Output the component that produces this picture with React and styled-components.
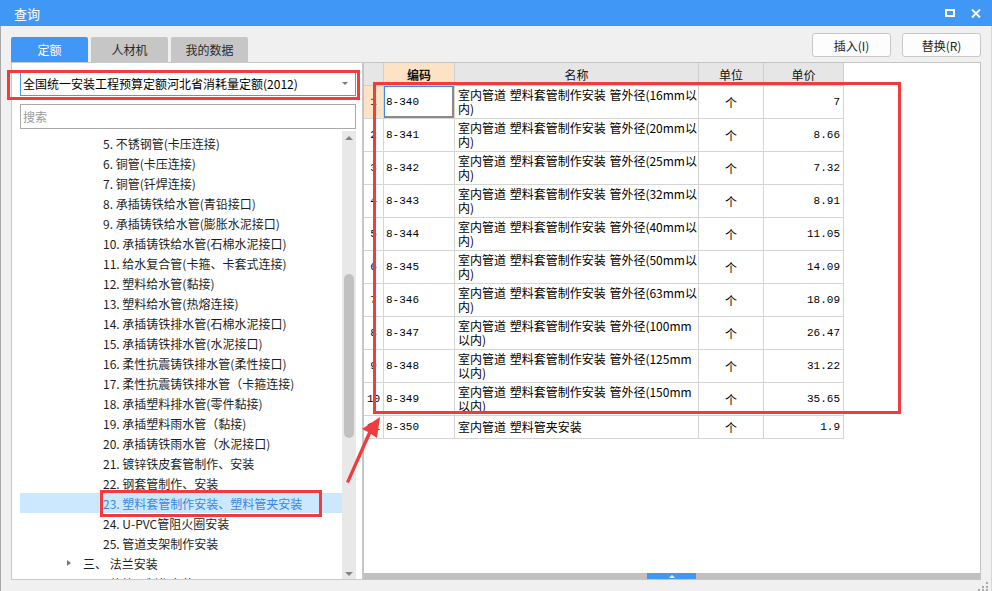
import React from 'react';
import styled, { createGlobalStyle } from 'styled-components';

const Global = createGlobalStyle`
  html, body { margin: 0; padding: 0; background: #f0f0f0; }
  body { font-family: "Noto Sans CJK SC", "Noto Sans", sans-serif; }
  * { box-sizing: border-box; }
`;

const CJK = `"Noto Sans CJK SC", "Noto Sans", sans-serif`;
const MONO = `"Liberation Mono", "Noto Sans CJK SC", monospace`;
const BLUE = '#4197f6';
const RED = '#f03c3c';

const Window = styled.div`
  position: relative;
  width: 992px;
  height: 591px;
  display: flex;
  flex-direction: column;
  overflow: hidden;
  background: #f0f0f0;
  font-family: ${CJK};
`;

const TitleBar = styled.div`
  height: 26px;
  flex-shrink: 0;
  background: ${BLUE};
  display: flex;
  align-items: center;
  padding: 0 11px 0 14px;
  color: #fff;
  font-size: 13px;
`;

const Title = styled.div`
  flex: 1;
`;

const TitleIcons = styled.div`
  display: flex;
  align-items: center;
  gap: 16px;
`;

const Body = styled.div`
  flex: 1;
  display: flex;
  padding: 0 10px 11px 10px;
  border-left: 1px solid #a8a8a8;
  border-right: 1px solid #d8d8d8;
  min-height: 0;
`;

const LeftCol = styled.div`
  width: 352px;
  display: flex;
  flex-direction: column;
`;

const Tabs = styled.div`
  display: flex;
  gap: 3px;
  margin-top: 11px;
  height: 25px;
  flex-shrink: 0;
`;

const Tab = styled.div`
  width: 77px;
  display: flex;
  align-items: center;
  justify-content: center;
  font-size: 12px;
  border-radius: 2px 2px 0 0;
  background: ${p => (p.$active ? BLUE : '#c6c6c6')};
  color: ${p => (p.$active ? '#fff' : '#2a2a2a')};
`;

const LeftPanel = styled.div`
  flex: 1;
  min-height: 0;
  background: #fff;
  border: 1px solid #c9c9c9;
  display: flex;
  flex-direction: column;
  padding: 8px 6px 0 8px;
`;

const Combo = styled.div`
  height: 25px;
  flex-shrink: 0;
  border: 1px solid #4a9af5;
  display: flex;
  align-items: center;
  padding: 0 7px 0 2px;
  font-size: 12px;
  color: #000;
`;

const ComboText = styled.div`
  flex: 1;
  white-space: nowrap;
`;

const Caret = styled.div`
  width: 0;
  height: 0;
  border-left: 3px solid transparent;
  border-right: 3px solid transparent;
  border-top: 3px solid #777;
`;

const Search = styled.div`
  height: 25px;
  flex-shrink: 0;
  margin-top: 8px;
  border: 1px solid #a9a9a9;
  display: flex;
  align-items: center;
  padding-left: 2px;
  font-size: 12px;
  color: #9a9a9a;
`;

const Tree = styled.div`
  flex: 1;
  min-height: 0;
  margin-top: 2px;
  display: flex;
`;

const TreeList = styled.div`
  flex: 1;
  overflow: hidden;
  padding-top: 2px;
  display: flex;
  flex-direction: column;
`;

const TreeItem = styled.div`
  height: 20px;
  flex-shrink: 0;
  display: flex;
  align-items: center;
  padding-left: ${p => p.$indent}px;
  background: ${p => (p.$selected ? '#cce8ff' : 'transparent')};
  color: ${p => (p.$selected ? '#3a86e4' : '#1e1e1e')};
  font-size: 12px;
  white-space: nowrap;
`;

const Expander = styled.span`
  width: 0;
  height: 0;
  border-top: 3px solid transparent;
  border-bottom: 3px solid transparent;
  border-left: 4px solid #777;
  margin-right: 12px;
`;

const VScroll = styled.div`
  width: 14px;
  background: #e8e8e8;
  display: flex;
  flex-direction: column;
  align-items: center;
  padding: 5px 0 3px;
`;

const ArrowUp = styled.div`
  width: 0;
  height: 0;
  border-left: 4px solid transparent;
  border-right: 4px solid transparent;
  border-bottom: 4px solid #858585;
`;

const ArrowDown = styled.div`
  width: 0;
  height: 0;
  border-left: 4px solid transparent;
  border-right: 4px solid transparent;
  border-top: 4px solid #858585;
`;

const Thumb = styled.div`
  width: 10px;
  height: 164px;
  border-radius: 5px;
  background: #c1c1c1;
`;

const Spacer = styled.div`
  flex: 1;
`;

const RightCol = styled.div`
  flex: 1;
  display: flex;
  flex-direction: column;
  min-width: 0;
`;

const ButtonRow = styled.div`
  height: 36px;
  flex-shrink: 0;
  padding-top: 7px;
  display: flex;
  justify-content: flex-end;
  align-items: flex-start;
  gap: 11px;
`;

const Button = styled.div`
  width: 79px;
  height: 24px;
  border: 1px solid #c8c8c8;
  border-radius: 3px;
  background: #fdfdfd;
  display: flex;
  align-items: center;
  justify-content: center;
  font-size: 12px;
  color: #222;
`;

const Grid = styled.div`
  flex: 1;
  min-height: 0;
  background: #fff;
  border: 1px solid #c4c4c4;
  display: flex;
  flex-direction: column;
`;

const Table = styled.div`
  display: grid;
  grid-template-columns: 20px 71px 244px 65px 80px;
  grid-template-rows: 23px repeat(10, 33px) 23px;
  width: max-content;
`;

const HeadCell = styled.div`
  background: ${p => (p.$active ? '#fde3c5' : '#e6e6e6')};
  border-right: 1px solid #cfcfcf;
  border-bottom: 1px solid #cfcfcf;
  display: flex;
  align-items: center;
  justify-content: center;
  font-size: 12px;
  font-weight: ${p => (p.$active ? 700 : 400)};
  color: #111;
`;

const Cell = styled.div`
  border-right: 1px solid #d4d4d4;
  border-bottom: 1px solid #d4d4d4;
  display: flex;
  align-items: center;
  justify-content: ${p => p.$align || 'flex-start'};
  padding: 0 ${p => (p.$align === 'flex-end' ? '3px' : '0')} 0 ${p => (p.$align ? '0' : '2px')};
  font-size: ${p => (p.$mono ? '11px' : '12px')};
  font-family: ${p => (p.$mono ? MONO : CJK)};
  color: #000;
  background: ${p => (p.$hl ? '#fde3c5' : '#fff')};
  overflow: hidden;
  white-space: nowrap;
  box-shadow: ${p => (p.$focus ? 'inset 1px 1px 0 #3c8ce8, inset -2px -2px 0 #8a8a8a' : 'none')};
`;

const NameText = styled.div`
  padding-left: 1px;
  word-spacing: 1px;
`;

const NameLine = styled.div`
  height: 14px;
  line-height: 14px;
`;

const HScroll = styled.div`
  height: 6px;
  flex-shrink: 0;
  background: #c0c0c0;
  display: flex;
`;

const HThumb = styled.div`
  margin-left: 283px;
  width: 49px;
  background: ${BLUE};
  display: flex;
  align-items: center;
  justify-content: center;
`;

const TinyUp = styled.div`
  width: 0;
  height: 0;
  border-left: 3px solid transparent;
  border-right: 3px solid transparent;
  border-bottom: 3px solid #fff;
`;

const Mark = styled.div`
  position: absolute;
  left: ${p => p.$x}px;
  top: ${p => p.$y}px;
  width: ${p => p.$w}px;
  height: ${p => p.$h}px;
  border: 3px solid ${RED};
  pointer-events: none;
`;

const Overlay = styled.svg`
  position: absolute;
  left: 0;
  top: 0;
  pointer-events: none;
`;

const treeItems = [
  '5. 不锈钢管(卡压连接)',
  '6. 铜管(卡压连接)',
  '7. 铜管(钎焊连接)',
  '8. 承插铸铁给水管(青铅接口)',
  '9. 承插铸铁给水管(膨胀水泥接口)',
  '10. 承插铸铁给水管(石棉水泥接口)',
  '11. 给水复合管(卡箍、卡套式连接)',
  '12. 塑料给水管(黏接)',
  '13. 塑料给水管(热熔连接)',
  '14. 承插铸铁排水管(石棉水泥接口)',
  '15. 承插铸铁排水管(水泥接口)',
  '16. 柔性抗震铸铁排水管(柔性接口)',
  '17. 柔性抗震铸铁排水管（卡箍连接)',
  '18. 承插塑料排水管(零件黏接)',
  '19. 承插塑料雨水管（黏接)',
  '20. 承插铸铁雨水管（水泥接口)',
  '21. 镀锌铁皮套管制作、安装',
  '22. 钢套管制作、安装',
  '23. 塑料套管制作安装、塑料管夹安装',
  '24. U-PVC管阻火圈安装',
  '25. 管道支架制作安装',
];

const sizes = [
  ['8-340', '16mm以', '内)', '7'],
  ['8-341', '20mm以', '内)', '8.66'],
  ['8-342', '25mm以', '内)', '7.32'],
  ['8-343', '32mm以', '内)', '8.91'],
  ['8-344', '40mm以', '内)', '11.05'],
  ['8-345', '50mm以', '内)', '14.09'],
  ['8-346', '63mm以', '内)', '18.09'],
  ['8-347', '100mm', '以内)', '26.47'],
  ['8-348', '125mm', '以内)', '31.22'],
  ['8-349', '150mm', '以内)', '35.65'],
];

const rows = [
  ...sizes.map(([code, a, b, price]) => ({
    code,
    lines: [`室内管道 塑料套管制作安装 管外径(${a}`, b],
    price,
  })),
  { code: '8-350', lines: ['室内管道 塑料管夹安装'], price: '1.9' },
];

export default function App() {
  return (
    <>
      <Global />
      <Window>
        <TitleBar>
          <Title>查询</Title>
          <TitleIcons>
            <svg width="10" height="8" viewBox="0 0 10 8">
              <rect x="1" y="1" width="8" height="6" fill="none" stroke="#fff" strokeWidth="2" />
            </svg>
            <svg width="10" height="9" viewBox="0 0 10 9">
              <path d="M1 0.5 L9 8.5 M9 0.5 L1 8.5" stroke="#fff" strokeWidth="2" />
            </svg>
          </TitleIcons>
        </TitleBar>
        <Body>
          <LeftCol>
            <Tabs>
              <Tab $active>定额</Tab>
              <Tab>人材机</Tab>
              <Tab>我的数据</Tab>
            </Tabs>
            <LeftPanel>
              <Combo>
                <ComboText>全国统一安装工程预算定额河北省消耗量定额(2012)</ComboText>
                <Caret />
              </Combo>
              <Search>搜索</Search>
              <Tree>
                <TreeList>
                  {treeItems.map((t, i) => (
                    <TreeItem key={t} $indent={83} $selected={i === 18}>
                      {t}
                    </TreeItem>
                  ))}
                  <TreeItem $indent={47}>
                    <Expander />
                    三、 法兰安装
                  </TreeItem>
                  <TreeItem $indent={47}>
                    <Expander />
                    四、 伸缩器制作安装
                  </TreeItem>
                </TreeList>
                <VScroll>
                  <ArrowUp />
                  <Thumb style={{ marginTop: 134 }} />
                  <Spacer />
                  <ArrowDown />
                </VScroll>
              </Tree>
            </LeftPanel>
          </LeftCol>
          <RightCol>
            <ButtonRow>
              <Button>插入(I)</Button>
              <Button>替换(R)</Button>
            </ButtonRow>
            <Grid>
              <Table>
                <HeadCell />
                <HeadCell $active>编码</HeadCell>
                <HeadCell>名称</HeadCell>
                <HeadCell>单位</HeadCell>
                <HeadCell>单价</HeadCell>
                {rows.map((r, i) => (
                  <React.Fragment key={r.code}>
                    <Cell $mono $align="center" $hl={i === 0}>{i + 1}</Cell>
                    <Cell $mono $focus={i === 0}>{r.code}</Cell>
                    <Cell>
                      <NameText>
                        {r.lines.map(l => (
                          <NameLine key={l}>{l}</NameLine>
                        ))}
                      </NameText>
                    </Cell>
                    <Cell $align="center">个</Cell>
                    <Cell $mono $align="flex-end">{r.price}</Cell>
                  </React.Fragment>
                ))}
              </Table>
              <Spacer />
              <HScroll>
                <HThumb>
                  <TinyUp />
                </HThumb>
              </HScroll>
            </Grid>
          </RightCol>
        </Body>

        <Mark $x={7} $y={70} $w={353} $h={30} />
        <Mark $x={100} $y={490} $w={222} $h={27} />
        <Mark $x={373} $y={82} $w={528} $h={332} />
        <Overlay width="992" height="591" viewBox="0 0 992 591">
          <path d="M346 482 L349 483 L371 434 L377 438 L380 417 L362 429 L368 432 Z" fill={RED} />
          <g fill="#a9a9a9">
            <rect x="986" y="582" width="2" height="2" />
            <rect x="982" y="586" width="2" height="2" />
            <rect x="986" y="586" width="2" height="2" />
            <rect x="978" y="589" width="2" height="2" />
            <rect x="982" y="589" width="2" height="2" />
            <rect x="986" y="589" width="2" height="2" />
          </g>
        </Overlay>
      </Window>
    </>
  );
}
